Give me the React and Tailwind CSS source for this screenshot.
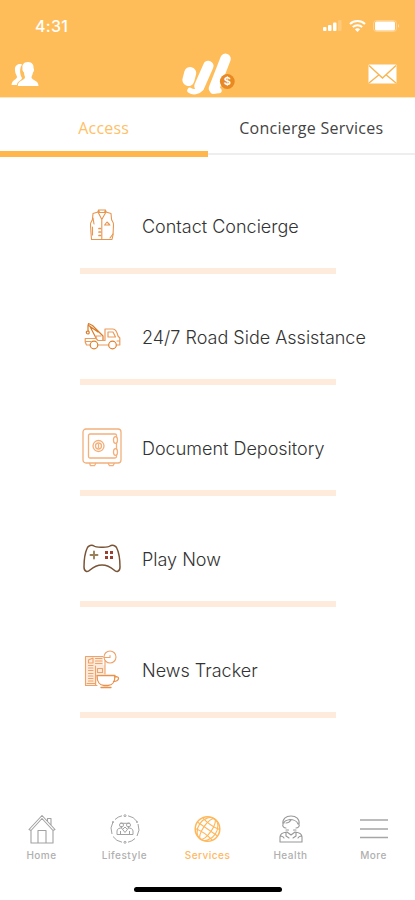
function VestIcon() {
  return (
    <svg width="26" height="32" viewBox="0 0 26 32" fill="none" stroke="#e8954f" strokeWidth="1.1" strokeLinejoin="round" strokeLinecap="round">
      <path d="M9 3 L4 4.5 L3.5 10 C3.5 12 1 13 1.5 16 L2 24 L2.5 30.5 H12.5 M17 3 L22 4.5 L22.5 10 C22.5 12 25 13 24.5 16 L24 26 L23 30.5 H12.5" />
      <path d="M9 3 L9.5 1 H16.5 L17 3 L12.8 10.5 Z M9.5 1 L10.5 3.5 H15.5 L16.5 1 M4 9 L5 15 M12.8 10.5 V30.5" />
      <path d="M15.5 16 H21 M16 15.5 L18 13 L20.5 15.5 M3.5 18 V26 M24 25 L21 29" />
      <path d="M10 19.5 H11.5 M10 23 H11.5 M10 26.5 H11.5" strokeWidth="1.7" />
    </svg>
  )
}

function TowTruckIcon() {
  return (
    <svg width="37" height="28" viewBox="0 0 37 28" fill="none" stroke="#eb9c5c" strokeWidth="1.2" strokeLinejoin="round" strokeLinecap="round">
      <path d="M4 9 V4 L4.5 1.5 L8.5 3.5 L19 14 V18 M6 4.5 L12 16 M4 3 L14 10 M4 9 C1.5 9 2 12 4 12 C5.5 12 5.5 10 4.5 9" stroke="#d97c2a" />
      <path d="M6 23 H2.5 L1.2 20 V16.5 H12 L14 18.5 H21 V7 H29 C32 7 33 10 34 14 L35.8 16 V23 H33 M24 23 H14" />
      <path d="M24 10 H29 L31.5 15 H24 Z M12 16.5 V14 H17 M1.5 19.5 H7 M33 19 H35.5" />
      <circle cx="10" cy="23" r="3.8" stroke="#df812b" />
      <circle cx="28.5" cy="23" r="3.8" stroke="#df812b" />
    </svg>
  )
}

function SafeIcon() {
  return (
    <svg width="40" height="39" viewBox="0 0 40 39" fill="none" stroke="#f2b07c" strokeWidth="1.3" strokeLinejoin="round">
      <rect x="1" y="1" width="38" height="34" rx="3" />
      <rect x="6.5" y="6" width="28" height="24" rx="1.5" />
      <path d="M7.5 35 L8.5 37.7 H12.5 L14 35 M26 35 L27.5 37.7 H31 L32.5 35" />
      <circle cx="16.5" cy="18" r="5.5" />
      <circle cx="16.5" cy="18" r="3" />
      <path d="M16.5 16 V20" />
      <ellipse cx="33.5" cy="12" rx="2" ry="3.3" fill="#fff" />
      <ellipse cx="33.5" cy="24" rx="2" ry="3.3" fill="#fff" />
    </svg>
  )
}

function GamepadIcon() {
  return (
    <svg width="38" height="29" viewBox="0 0 38 29" fill="none" strokeLinejoin="round" strokeLinecap="round">
      <path
        d="M11 2 C12.5 3.3 14.5 3.2 19 3.2 S25.5 3.3 27 2 C29 .5 33 1.5 34 4.5 C36 9 37 17 37 23 C37 28 33.5 28.5 31 26 C27 22.5 24 21 19 21 S11 22.5 7 26 C4.5 28.5 1 28 1 23 C1 17 2 9 4 4.5 C5 1.5 9 .5 11 2 Z"
        stroke="#795335"
        strokeWidth="1.5"
      />
      <path d="M11 7.5 V14.5 M7.5 11 H14.5" stroke="#9a8058" strokeWidth="1.9" />
      <path d="M22 7 H25 V10 H22 Z M27 7 H30 V10 H27 Z M22 12 H25 V15 H22 Z M27 12 H30 V15 H27 Z" fill="#9b4030" />
    </svg>
  )
}

function NewsIcon() {
  return (
    <svg width="36" height="39" viewBox="0 0 36 39" fill="none" stroke="#eda36c" strokeWidth="1.1" strokeLinejoin="round" strokeLinecap="round">
      <path d="M1.5 6.5 H19 V15 H21 V24 H13 V35.5 H1.5 Z" fill="#fdeadb" stroke="none" />
      <path d="M19 6.5 H1.5 V35.5 H13 M21 11 V24" />
      <path d="M4.5 10 L9 8 V13 H4.5 Z M11.5 8.5 H18 M11.5 11 H18 M11.5 13.5 H18 M4.5 15.5 H9 M4.5 18 H9 M4.5 20.5 H9 M11.5 16 V35 M4.5 23.5 H9 M4.5 26 H9 M4.5 28.5 H9 M4.5 31 H9 M13.5 18.5 H18.5 V22.5 H13.5 Z M3 33.5 H11" />
      <circle cx="26" cy="7" r="6" />
      <path d="M26 5.5 V7.5 H20" />
      <path d="M13 25.5 H31 C31 32 28 35.5 24 35.5 H20 C16 35.5 13 32 13 25.5 Z M30.5 27 C36 25.5 36 31 29.5 31.5 M17 37.5 H27" stroke="#e8924d" strokeWidth="1.3" />
    </svg>
  )
}

function HomeIcon() {
  return (
    <svg width="28" height="30" viewBox="0 0 28 30" fill="none" stroke="#a2a2a2" strokeWidth="1.1" strokeLinejoin="round">
      <path d="M1 15.5 L14 1.5 L27 15.5 L25 16.5 L14 4.5 L3 16.5 Z M3 16.5 V29 H25 V16.5 M10 29 V16.5 H18 V29 M19.5 7 V4.5 H23 V11" />
    </svg>
  )
}

function LifestyleIcon() {
  return (
    <svg width="30" height="30" viewBox="0 0 30 30" fill="none" stroke="#a2a2a2" strokeWidth="1" strokeLinejoin="round">
      <path d="M12 1.8 A13.5 13.5 0 0 0 5 5.5 M3 8 A13.5 13.5 0 0 0 2 20 M3 22.5 A13.5 13.5 0 0 0 12 28.2 M18 28.2 A13.5 13.5 0 0 0 25 24.5 M27 22 A13.5 13.5 0 0 0 28 10 M27 7.5 A13.5 13.5 0 0 0 18 1.8" />
      <circle cx="15" cy="1.7" r="1" />
      <circle cx="15" cy="28.3" r="1" />
      <circle cx="3" cy="8" r=".6" />
      <circle cx="27" cy="8" r=".6" />
      <circle cx="11.5" cy="11" r="2" />
      <circle cx="18.5" cy="11" r="2" />
      <path d="M10 9.3 H20 M7 20.5 V17 C7 14.5 10 14 11.5 14 L15 18.5 L18.5 14 C20 14 23 14.5 23 17 V20.5 H7 M11.5 14 V12 M18.5 14 V12 M13 15 L15 13 L17 15 M10.5 17 V20 M19.5 17 V20" />
    </svg>
  )
}

function GlobeIcon() {
  return (
    <svg width="27" height="28" viewBox="0 0 27 28" fill="none" stroke="#ffb75a" strokeWidth="1.1">
      <circle cx="13.5" cy="14" r="12.3" strokeWidth="1.5" />
      <g transform="rotate(35 13.5 14)">
        <ellipse cx="13.5" cy="14" rx="4.2" ry="12.3" />
        <ellipse cx="13.5" cy="14" rx="9.3" ry="12.3" />
        <path d="M1.2 14 H25.8 M3.2 7.5 Q13.5 10 23.8 7.5 M3.2 20.5 Q13.5 18 23.8 20.5" />
      </g>
    </svg>
  )
}

function HealthIcon() {
  return (
    <svg width="24" height="28" viewBox="0 0 24 28" fill="none" stroke="#989898" strokeWidth="1.1" strokeLinejoin="round" strokeLinecap="round">
      <path d="M4 9.5 C3 4 7 1 12 1 S21 4 20 9.5 M5 8 C5 5.5 8 5 11 4.5 C14 4.5 18 6 19 9 M7 8 C9 8 11 6.5 12 5 M4 9.5 C3 11 5 13 7 13 M20 9.5 C21 11 19 13 17 13" />
      <path d="M7 15 H9.5 M14.5 15 H17 M8 17 C4 17.5 1 18.5 1 22 M16 17 C20 17.5 23 18.5 23 22 M8 17 L12 20 L16 17 M1 22 C1 20.5 4 21 5 23 M23 22 C23 20.5 20 21 19 23 M1 22 V27 H23 V22 M7 18 V21 L10 23 M17 18 V21 L14 23" />
    </svg>
  )
}

function MoreIcon() {
  return (
    <svg width="28" height="22" viewBox="0 0 28 22" stroke="#a6a6a6" strokeWidth="1.3">
      <path d="M0 2 H28 M0 11 H28 M0 19.5 H28" />
    </svg>
  )
}

function Logo() {
  return (
    <svg width="54" height="44" viewBox="0 0 54 44" fill="none" stroke="#fff" strokeLinecap="round">
      <path d="M8.2 20 L6.4 27" strokeWidth="12" />
      <path d="M26.3 13 L17.5 33" strokeWidth="10.5" />
      <path d="M8 37.5 C11 39.5 16 39 19 35.5" strokeWidth="5.5" />
      <path d="M43.5 5.8 L32 35.5" strokeWidth="10.5" />
      <path d="M31 38 L37 37.5" strokeWidth="5.5" />
      <circle cx="45.3" cy="28.5" r="7.4" fill="#e88923" stroke="none" />
      <text x="45.3" y="32.3" fill="#fff" stroke="none" textAnchor="middle" className="font-['Inter'] text-[11px] font-bold">
        $
      </text>
    </svg>
  )
}

const services = [
  { label: 'Contact Concierge', Icon: VestIcon },
  { label: '24/7 Road Side Assistance', Icon: TowTruckIcon },
  { label: 'Document Depository', Icon: SafeIcon },
  { label: 'Play Now', Icon: GamepadIcon },
  { label: 'News Tracker', Icon: NewsIcon },
]

const navItems = [
  { label: 'Home', Icon: HomeIcon },
  { label: 'Lifestyle', Icon: LifestyleIcon },
  { label: 'Services', Icon: GlobeIcon, active: true },
  { label: 'Health', Icon: HealthIcon },
  { label: 'More', Icon: MoreIcon },
]

export default function App() {
  return (
    <div className="flex h-[900px] w-[415px] flex-col overflow-hidden bg-white font-['Inter',sans-serif]">
      <header className="h-[98px] shrink-0 border-b border-[#ffe5c0] bg-[#ffbd5a] text-white">
        <div className="flex h-[52px] items-center justify-between pl-[35px] pr-[15px]">
          <span className="text-[16px] font-medium tracking-[0.3px]">4:31</span>
          <div className="flex items-center gap-[7px]">
            <svg width="19" height="12" viewBox="0 0 19 12" fill="#fff">
              <rect x="0" y="7" width="3.5" height="4" rx="1" />
              <rect x="5" y="5" width="3.5" height="6" rx="1" />
              <rect x="10" y="2.5" width="3.5" height="8.5" rx="1" />
              <rect x="15" y="0" width="3.5" height="11" rx="1" opacity=".2" />
            </svg>
            <svg width="17" height="12" viewBox="0 0 17 12" fill="none" stroke="#fff" strokeWidth="2">
              <path d="M1 4 C5 0 12 0 16 4 M3.8 7 C6.5 4.5 10.5 4.5 13.2 7" />
              <path d="M8.5 12 L5.8 9.3 C7.5 8 9.5 8 11.2 9.3 Z" fill="#fff" stroke="none" />
            </svg>
            <svg width="27" height="12" viewBox="0 0 27 12">
              <rect x=".5" y=".5" width="23" height="11" rx="3" fill="none" stroke="#fff" opacity=".3" />
              <rect x="2" y="1.5" width="20" height="9" rx="1.5" fill="#fff" />
              <path d="M25 4 Q27 6 25 8 Z" fill="#fff" opacity=".5" />
            </svg>
          </div>
        </div>
        <div className="flex h-[45px] items-center justify-between pl-[11px] pr-[18px]">
          <svg width="28" height="26" viewBox="0 0 28 26" fill="#fff" className="mb-0.5">
            <path d="M11 3.5 C7 2 3.5 5 4 9 C4 13 6 14 6 16 C6 18.5 1 18.5 .5 24 H6 C6 20 11 19.5 11 17 C9 14 8 8 11 3.5 Z" />
            <path d="M17 1 C12.5 1 11 4 11.5 7 C11 9 12 10.5 13 11.5 C13 14 14 15 14 16.5 C13.5 19.5 7 19 6.8 25 H27.5 C27.5 19 21 19.5 20.5 16.5 C20.5 15 21.5 14 22 11.5 C23 10 23.5 8.5 22.5 7 C23 4 21 1 17 1 Z" />
          </svg>
          <div className="ml-[10px]">
            <Logo />
          </div>
          <svg width="29" height="20" viewBox="0 0 29 20" className="mb-0.5">
            <rect x=".5" y=".5" width="28" height="19" rx="1" fill="#fff" />
            <path d="M1 1.5 L14.5 14 L28 1.5 M1 19 L11 10.8 M28 19 L18 10.8" fill="none" stroke="#f9b44e" strokeWidth="1.4" />
          </svg>
        </div>
      </header>

      <div className="grid h-[59px] shrink-0 grid-cols-2 font-['Open_Sans',sans-serif] text-[16px]">
        <div className="flex items-center justify-center border-b-[6px] border-[#ffb74c] pt-[6px] tracking-[0.2px] text-[#ffbf68]">
          Access
        </div>
        <div className="pb-[2px]">
          <div className="flex h-full items-center justify-center border-b-2 border-[#eee] pt-[5px] tracking-[0.28px] text-[#444]">
            Concierge Services
          </div>
        </div>
      </div>

      <main className="flex-1 pl-20 pt-[6px]">
        {services.map(({ label, Icon }) => (
          <div key={label} className="h-[111px] pt-10">
            <div className="flex h-12 items-center gap-[18px]">
              <div className="flex w-11 justify-center pb-1">
                <Icon />
              </div>
              <span className="whitespace-nowrap pb-[2px] text-[18px] font-light text-[#333]">{label}</span>
            </div>
            <div className="mt-[17px] h-[6px] w-64 bg-[#ffebdc]" />
          </div>
        ))}
      </main>

      <footer className="h-[90px] shrink-0">
        <nav className="grid h-[77px] grid-cols-5">
          {navItems.map(({ label, Icon, active }) => (
            <div key={label} className={`flex flex-col items-center ${active ? 'text-[#ffb861]' : 'text-[#b0b0b0]'}`}>
              <div className="flex h-[38px] items-center">
                <Icon />
              </div>
              <span className="mt-px text-[10px] font-medium leading-[12px] tracking-[0.5px]">{label}</span>
            </div>
          ))}
        </nav>
        <div className="mx-auto h-[5px] w-[148px] rounded-full bg-black" />
      </footer>
    </div>
  )
}
